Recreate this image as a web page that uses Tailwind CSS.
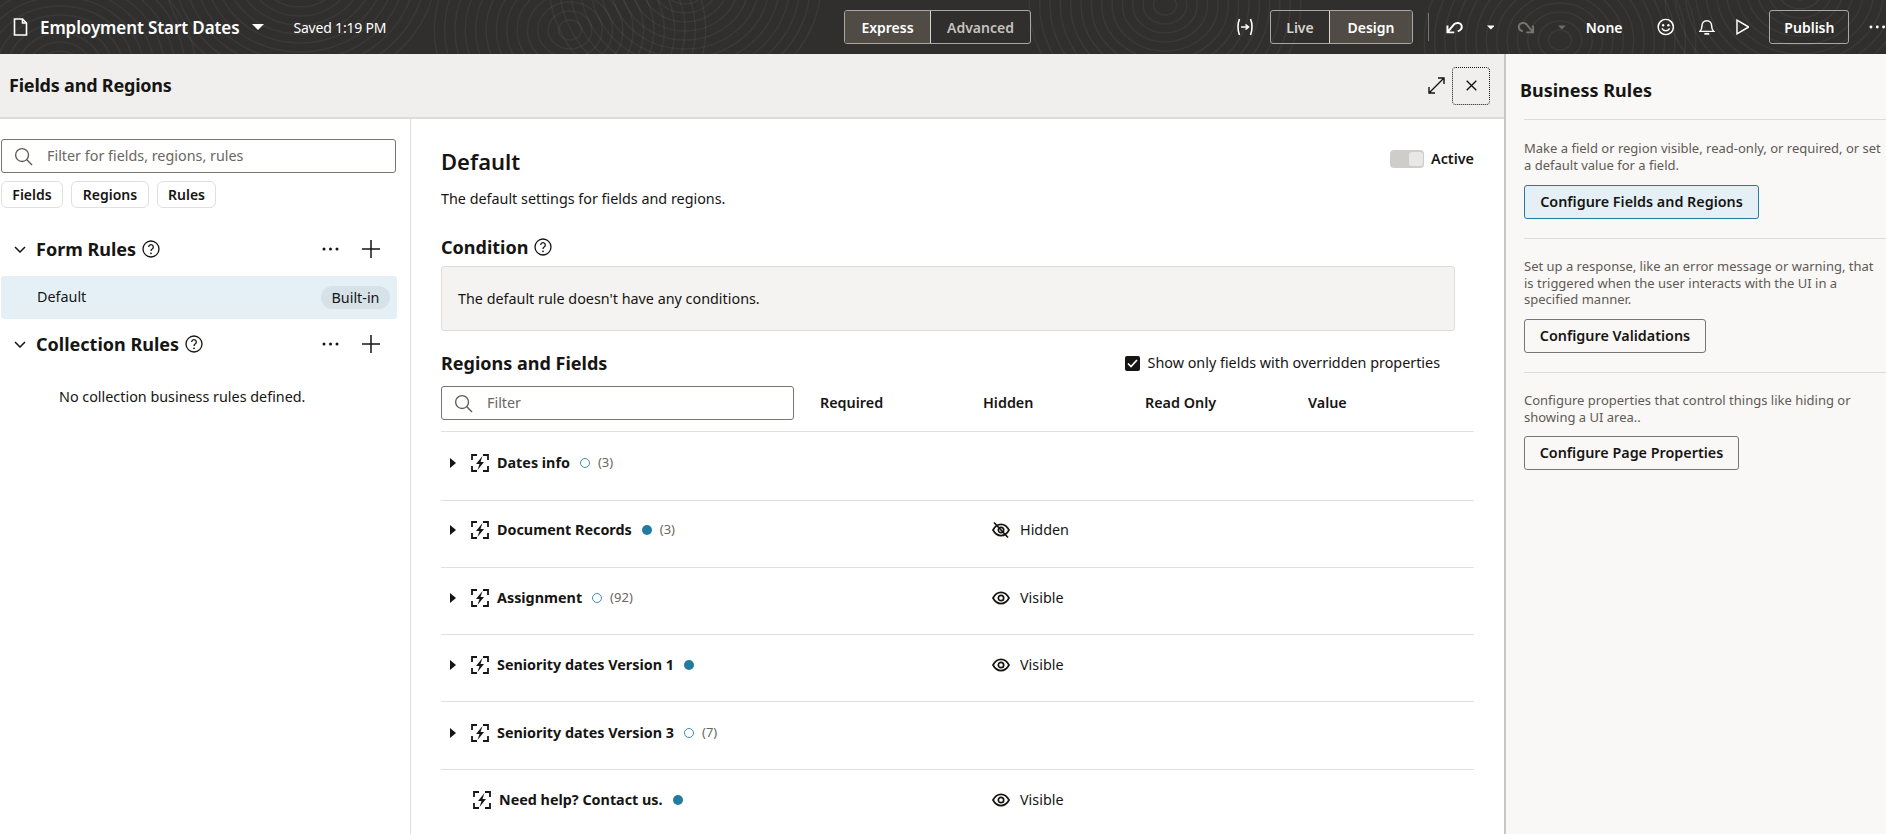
<!DOCTYPE html>
<html lang="en">
<head>
<meta charset="UTF-8">
<title>Employment Start Dates</title>
<script src="https://cdn.jsdelivr.net/npm/@tailwindcss/browser@4"></script>
</head>
<body class="h-[834px] w-[1886px] overflow-hidden bg-white font-['Noto_Sans',sans-serif] text-[14.35px] text-[#161513]">

<svg class="hidden">
  <symbol id="region" viewBox="0 0 18 18">
    <path d="M1 6V1h5M12 1h5v5M17 12v5h-5M6 17H1v-5" fill="none" stroke="#161513" stroke-width="1.800"/>
    <path d="M11.500 2 5 10h3.500L6.500 16l6.500-8H9.500z" fill="#161513"/>
  </symbol>
  <symbol id="eye" viewBox="0 0 18 18">
    <path d="M1 9c2-3.800 4.800-5.600 8-5.600s6 1.800 8 5.600c-2 3.800-4.800 5.600-8 5.600S3 12.800 1 9z" fill="none" stroke="#161513" stroke-width="1.700"/>
    <circle cx="9" cy="9" r="2.700" fill="none" stroke="#161513" stroke-width="1.700"/>
  </symbol>
  <symbol id="help" viewBox="0 0 18 18">
    <circle cx="9" cy="9" r="8" fill="none" stroke="#161513" stroke-width="1.300"/>
    <path d="M6.700 7a2.300 2.300 0 1 1 3.500 2c-.8.5-1.200 1-1.200 1.900" fill="none" stroke="#161513" stroke-width="1.300"/>
    <circle cx="9" cy="13.300" r=".9" fill="#161513"/>
  </symbol>
  <symbol id="search" viewBox="0 0 20 20">
    <circle cx="8.500" cy="8.500" r="6.800" fill="none" stroke="#5f5a55" stroke-width="1.400"/>
    <path d="m13.500 13.500 5.500 5.500" stroke="#5f5a55" stroke-width="1.400"/>
  </symbol>
  <symbol id="plus" viewBox="0 0 18 18">
    <path d="M9 0v18M0 9h18" stroke="#161513" stroke-width="1.500"/>
  </symbol>
  <symbol id="dots" viewBox="0 0 17 4">
    <circle cx="2" cy="2" r="1.500" fill="#161513"/><circle cx="8.500" cy="2" r="1.500" fill="#161513"/><circle cx="15" cy="2" r="1.500" fill="#161513"/>
  </symbol>
  <symbol id="chev" viewBox="0 0 12 7">
    <path d="m1 1 5 5 5-5" fill="none" stroke="#161513" stroke-width="1.500"/>
  </symbol>
  <symbol id="rowcaret" viewBox="0 0 6 10">
    <path d="M0 0 6 5 0 10z" fill="#161513"/>
  </symbol>
  <symbol id="downcaret" viewBox="0 0 12 6">
    <path d="M0 0h12L6 6z" fill="currentColor"/>
  </symbol>
</svg>

<!-- top bar -->
<header class="relative flex h-[54px] items-center overflow-hidden bg-[#302f2e] text-white">
  <svg id="contours" class="absolute inset-0 h-full w-full" viewBox="0 0 1886 54" fill="none"></svg>

  <div class="relative flex w-[844px] shrink-0 items-center pl-[13px]">
    <svg class="h-[18px] w-[15px]" viewBox="0 0 15 18"><path d="M1.500 1h8l4 4v12h-12z M9.500 1v4h4" fill="none" stroke="#fff" stroke-width="1.600"/></svg>
    <span class="ml-[12px] text-[17px] leading-none font-semibold tracking-[-0.1px]">Employment Start Dates</span>
    <svg class="ml-[13px] h-[6px] w-[12px] text-white"><use href="#downcaret"/></svg>
    <span class="ml-[29px] text-[14px] tracking-[-0.2px]">Saved 1:19 PM</span>
  </div>

  <div class="relative flex h-[34px] w-[187px] shrink-0 rounded-[3px] border border-[#a9a6a3] text-[14px] font-semibold">
    <div class="flex w-[86px] items-center justify-center rounded-l-[2px] border-r border-[#d8d6d3] bg-[#514b45]">Express</div>
    <div class="flex flex-1 items-center justify-center text-[#c5c2be]">Advanced</div>
  </div>

  <div class="relative ml-[205px] flex h-[34px] w-[18px] items-center justify-center">
    <svg class="h-[18px] w-[18px]" viewBox="0 0 18 18"><path d="M3.500 1C1.500 5.500 1.500 12.500 3.500 17M14.500 1c2 4.500 2 11.500 0 16" fill="none" stroke="#fff" stroke-width="1.600"/><path d="M5 9h6.500M9.500 6.500 12.500 9l-3 2.500" fill="none" stroke="#fff" stroke-width="1.600"/></svg>
  </div>

  <div class="relative ml-[16px] flex h-[34px] w-[143px] shrink-0 rounded-[3px] border border-[#a9a6a3] text-[14px] font-semibold">
    <div class="flex w-[58px] items-center justify-center text-[#d6d3cf]">Live</div>
    <div class="flex flex-1 items-center justify-center rounded-r-[2px] border-l border-[#d8d6d3] bg-[#514b45]">Design</div>
  </div>

  <div class="relative ml-[15px] h-[28px] w-px bg-[#77736e]"></div>

  <svg class="relative ml-[17px] h-[14px] w-[18px]" viewBox="0 0 18 14"><path d="M1.500 5.500v7h7M1.800 12 8 4.500c2.500-2.500 7-2 8 1 .6 2.500-1 5-4 6" fill="none" stroke="#fff" stroke-width="2"/></svg>
  <svg class="relative ml-[23px] h-[5px] w-[8px] text-white"><use href="#downcaret"/></svg>
  <svg class="relative ml-[23px] h-[14px] w-[18px]" viewBox="0 0 18 14"><path d="M16.500 5.500v7h-7M16.200 12 10 4.500c-2.500-2.500-7-2-8 1-.6 2.500 1 5 4 6" fill="none" stroke="#77736e" stroke-width="2"/></svg>
  <svg class="relative ml-[23px] h-[5px] w-[8px] text-[#6d6964]"><use href="#downcaret"/></svg>
  <span class="relative ml-[20px] w-[37px] text-[14px] font-semibold">None</span>

  <svg class="relative ml-[34px] h-[18px] w-[18px]" viewBox="0 0 18 18"><circle cx="9" cy="9" r="7.800" fill="none" stroke="#fff" stroke-width="1.500"/><circle cx="6.300" cy="7.200" r="1.200" fill="#fff"/><circle cx="11.700" cy="7.200" r="1.200" fill="#fff"/><path d="M5 10.500c1.800 3.200 6.200 3.200 8 0" fill="none" stroke="#fff" stroke-width="1.500"/></svg>
  <svg class="relative ml-[25px] h-[18px] w-[16px]" viewBox="0 0 16 18"><path d="M1 13.500c1.500-1.300 2-2.600 2-5.500 0-3.200 2-5.500 5-5.500s5 2.300 5 5.500c0 2.900.5 4.200 2 5.500z" fill="none" stroke="#fff" stroke-width="1.500"/><path d="M5.500 16h5" stroke="#fff" stroke-width="1.800"/></svg>
  <svg class="relative ml-[21px] h-[16px] w-[14px]" viewBox="0 0 14 16"><path d="M1 1v14l12-7z" fill="none" stroke="#fff" stroke-width="1.500"/></svg>

  <div class="relative ml-[20px] flex h-[34px] w-[82px] items-center justify-center rounded-[3px] border border-[#a9a6a3] text-[14px] font-semibold">Publish</div>
  <svg class="relative ml-[20px] h-[4px] w-[17px]" viewBox="0 0 17 4"><circle cx="2" cy="2" r="1.500" fill="#fff"/><circle cx="8.500" cy="2" r="1.500" fill="#fff"/><circle cx="15" cy="2" r="1.500" fill="#fff"/></svg>
</header>

<div class="flex h-[780px]">
  <!-- fields and regions -->
  <section class="flex w-[1504px] shrink-0 flex-col">
    <div class="flex h-[65px] items-center border-b-2 border-[#dedcd9] bg-[#f0efed] pr-[14px] pl-[9px]">
      <h1 class="flex-1 text-[18px] font-bold tracking-[-0.2px]">Fields and Regions</h1>
      <svg class="h-[17px] w-[17px]" viewBox="0 0 17 17"><path d="M10 1h6v6M16 1 1 16M1 10v6h6" fill="none" stroke="#161513" stroke-width="1.400"/></svg>
      <div class="ml-[7px] flex h-[38px] w-[38px] items-center justify-center rounded-[4px] border border-dotted border-[#161513]">
        <svg class="h-[11px] w-[11px]" viewBox="0 0 11 11"><path d="m.7.700 9.600 9.600M10.300.700.7 10.300" stroke="#161513" stroke-width="1.400"/></svg>
      </div>
    </div>

    <div class="flex min-h-0 flex-1">
      <!-- left column -->
      <aside class="w-[411px] shrink-0 border-r border-[#e2e0dd] pt-[20px] pl-px">
        <div class="flex h-[34px] w-[395px] items-center rounded-[3px] border border-[#7a7571] pl-[12px]">
          <svg class="h-[19px] w-[19px]"><use href="#search"/></svg>
          <span class="ml-[14px] text-[#6b6661]">Filter for fields, regions, rules</span>
        </div>
        <div class="mt-[8px] flex gap-[8px] text-[14px] font-semibold">
          <span class="flex h-[27px] w-[62px] items-center justify-center rounded-[6px] border border-[#e2e0dd]">Fields</span>
          <span class="flex h-[27px] w-[78px] items-center justify-center rounded-[6px] border border-[#e2e0dd]">Regions</span>
          <span class="flex h-[27px] w-[59px] items-center justify-center rounded-[6px] border border-[#e2e0dd]">Rules</span>
        </div>

        <div class="mt-[25px] flex h-[32px] items-center pl-[13px]">
          <svg class="h-[7px] w-[12px]"><use href="#chev"/></svg>
          <span class="ml-[10px] text-[18px] font-bold">Form Rules</span>
          <svg class="ml-[6px] h-[18px] w-[18px]"><use href="#help"/></svg>
          <svg class="ml-auto h-[4px] w-[17px]"><use href="#dots"/></svg>
          <svg class="mr-[30px] ml-[23px] h-[18px] w-[18px]"><use href="#plus"/></svg>
        </div>
        <div class="mt-[11px] flex h-[43px] w-[396px] items-center rounded-[3px] bg-[#e4f0f6] pr-[7px] pl-[36px]">
          <span class="flex-1 pb-[2px]">Default</span>
          <span class="flex h-[23px] w-[69px] items-center justify-center rounded-full bg-[#d6e1e8]">Built-in</span>
        </div>
        <div class="mt-[9px] flex h-[32px] items-center pl-[13px]">
          <svg class="h-[7px] w-[12px]"><use href="#chev"/></svg>
          <span class="ml-[10px] text-[18px] font-bold">Collection Rules</span>
          <svg class="ml-[6px] h-[18px] w-[18px]"><use href="#help"/></svg>
          <svg class="ml-auto h-[4px] w-[17px]"><use href="#dots"/></svg>
          <svg class="mr-[30px] ml-[23px] h-[18px] w-[18px]"><use href="#plus"/></svg>
        </div>
        <p class="mt-[26px] pl-[58px]">No collection business rules defined.</p>
      </aside>

      <!-- default rule -->
      <main class="min-w-0 flex-1 pt-[25px] pr-[30px] pl-[30px]">
        <div class="flex h-[30px] items-center">
          <h2 class="mt-[4px] flex-1 text-[22px] font-semibold">Default</h2>
          <div class="relative h-[18px] w-[34px] rounded-[4px] bg-[#cfcdca]"><div class="absolute top-[2px] right-[1px] h-[14px] w-[14px] rounded-[3px] bg-[#e9e8e6]"></div></div>
          <span class="ml-[7px] font-semibold">Active</span>
        </div>
        <p class="mt-[13px] leading-[24px]">The default settings for fields and regions.</p>
        <div class="mt-[23px] flex h-[26px] items-center">
          <h3 class="text-[18px] font-bold">Condition</h3>
          <svg class="ml-[6px] h-[18px] w-[18px]"><use href="#help"/></svg>
        </div>
        <div class="mt-[6px] flex h-[65px] w-[1014px] items-center rounded-[3px] border border-[#dedcd9] bg-[#f4f3f1] pl-[16px]">The default rule doesn't have any conditions.</div>

        <div class="mt-[19px] flex h-[26px] items-center">
          <h3 class="flex-1 text-[18px] font-bold">Regions and Fields</h3>
          <div class="flex h-[15px] w-[15px] items-center justify-center rounded-[2px] bg-[#161513]">
            <svg class="h-[9px] w-[11px]" viewBox="0 0 11 9"><path d="m1 4.500 3 3 6-6.500" fill="none" stroke="#fff" stroke-width="1.700"/></svg>
          </div>
          <span class="mr-[34px] ml-[8px]">Show only fields with overridden properties</span>
        </div>

        <div class="mt-[10px] flex h-[34px] items-center font-semibold">
          <div class="flex h-[34px] w-[353px] items-center rounded-[3px] border border-[#7a7571] pl-[12px] font-normal">
            <svg class="h-[19px] w-[19px]"><use href="#search"/></svg>
            <span class="ml-[14px] text-[#6b6661]">Filter</span>
          </div>
          <span class="ml-[26px] w-[163px]">Required</span>
          <span class="w-[162px]">Hidden</span>
          <span class="w-[163px]">Read Only</span>
          <span>Value</span>
        </div>

        <div class="mt-[11px] border-t border-[#e2e0dd]">
          <div class="flex h-[69px] items-start border-b border-[#e2e0dd] pt-[21px]">
            <svg class="mt-[5px] ml-[9px] h-[10px] w-[6px]"><use href="#rowcaret"/></svg>
            <svg class="mt-[1px] ml-[15px] h-[18px] w-[18px]"><use href="#region"/></svg>
            <span class="ml-[8px] leading-[20px] font-bold">Dates info</span>
            <span class="mt-[5px] ml-[10px] h-[10px] w-[10px] rounded-full border border-[#3f8db0]"></span>
            <span class="ml-[8px] text-[13px] leading-[18px] text-[#6b6661]">(3)</span>
          </div>
          <div class="flex h-[67px] items-start border-b border-[#e2e0dd] pt-[19px]">
            <div class="flex w-[551px] items-start">
              <svg class="mt-[5px] ml-[9px] h-[10px] w-[6px]"><use href="#rowcaret"/></svg>
              <svg class="mt-[1px] ml-[15px] h-[18px] w-[18px]"><use href="#region"/></svg>
              <span class="ml-[8px] leading-[20px] font-bold">Document Records</span>
              <span class="mt-[5px] ml-[10px] h-[10px] w-[10px] rounded-full bg-[#227c9f]"></span>
              <span class="ml-[8px] text-[13px] leading-[18px] text-[#6b6661]">(3)</span>
            </div>
            <svg class="mt-[1px] h-[18px] w-[18px]" viewBox="0 0 18 18"><use href="#eye"/><path d="M2 1.500 16 16.500" stroke="#161513" stroke-width="1.700"/></svg>
            <span class="ml-[10px] leading-[20px]">Hidden</span>
          </div>
          <div class="flex h-[67px] items-start border-b border-[#e2e0dd] pt-[20px]">
            <div class="flex w-[551px] items-start">
              <svg class="mt-[5px] ml-[9px] h-[10px] w-[6px]"><use href="#rowcaret"/></svg>
              <svg class="mt-[1px] ml-[15px] h-[18px] w-[18px]"><use href="#region"/></svg>
              <span class="ml-[8px] leading-[20px] font-bold">Assignment</span>
              <span class="mt-[5px] ml-[10px] h-[10px] w-[10px] rounded-full border border-[#3f8db0]"></span>
              <span class="ml-[8px] text-[13px] leading-[18px] text-[#6b6661]">(92)</span>
            </div>
            <svg class="mt-[1px] h-[18px] w-[18px]"><use href="#eye"/></svg>
            <span class="ml-[10px] leading-[20px]">Visible</span>
          </div>
          <div class="flex h-[67px] items-start border-b border-[#e2e0dd] pt-[20px]">
            <div class="flex w-[551px] items-start">
              <svg class="mt-[5px] ml-[9px] h-[10px] w-[6px]"><use href="#rowcaret"/></svg>
              <svg class="mt-[1px] ml-[15px] h-[18px] w-[18px]"><use href="#region"/></svg>
              <span class="ml-[8px] leading-[20px] font-bold">Seniority dates Version 1</span>
              <span class="mt-[5px] ml-[10px] h-[10px] w-[10px] rounded-full bg-[#227c9f]"></span>
            </div>
            <svg class="mt-[1px] h-[18px] w-[18px]"><use href="#eye"/></svg>
            <span class="ml-[10px] leading-[20px]">Visible</span>
          </div>
          <div class="flex h-[68px] items-start border-b border-[#e2e0dd] pt-[21px]">
            <svg class="mt-[5px] ml-[9px] h-[10px] w-[6px]"><use href="#rowcaret"/></svg>
            <svg class="mt-[1px] ml-[15px] h-[18px] w-[18px]"><use href="#region"/></svg>
            <span class="ml-[8px] leading-[20px] font-bold">Seniority dates Version 3</span>
            <span class="mt-[5px] ml-[10px] h-[10px] w-[10px] rounded-full border border-[#3f8db0]"></span>
            <span class="ml-[8px] text-[13px] leading-[18px] text-[#6b6661]">(7)</span>
          </div>
          <div class="flex items-start pt-[20px]">
            <div class="flex w-[551px] items-start">
              <svg class="mt-[1px] ml-[32px] h-[18px] w-[18px]"><use href="#region"/></svg>
              <span class="ml-[8px] leading-[20px] font-bold">Need help? Contact us.</span>
              <span class="mt-[5px] ml-[10px] h-[10px] w-[10px] rounded-full bg-[#227c9f]"></span>
            </div>
            <svg class="mt-[1px] h-[18px] w-[18px]"><use href="#eye"/></svg>
            <span class="ml-[10px] leading-[20px]">Visible</span>
          </div>
        </div>
      </main>
    </div>
  </section>

  <!-- business rules -->
  <aside class="min-w-0 flex-1 border-l-2 border-[#c9c7c4] bg-[#faf8f6] pt-[22px] pl-[14px]">
    <h2 class="h-[28px] text-[18px] leading-[28px] font-bold">Business Rules</h2>
    <div class="mt-[15px] ml-[4px] border-t border-[#dedcd9] pt-[20px]">
      <p class="text-[13px] leading-[17px] whitespace-nowrap text-[#5f5a55]">Make a field or region visible, read-only, or required, or set<br>a default value for a field.</p>
      <div class="mt-[11px] flex h-[34px] w-[235px] items-center justify-center rounded-[3px] border border-[#227c9f] bg-[#e4f0f6] text-[14.35px] font-semibold">Configure Fields and Regions</div>
    </div>
    <div class="mt-[19px] ml-[4px] border-t border-[#dedcd9] pt-[19px]">
      <p class="text-[13px] leading-[16.500px] whitespace-nowrap text-[#5f5a55]">Set up a response, like an error message or warning, that<br>is triggered when the user interacts with the UI in a<br>specified manner.</p>
      <div class="mt-[11px] flex h-[34px] w-[182px] items-center justify-center rounded-[3px] border border-[#7a7571] font-semibold">Configure Validations</div>
    </div>
    <div class="mt-[19px] ml-[4px] border-t border-[#dedcd9] pt-[19px]">
      <p class="text-[13px] leading-[17px] whitespace-nowrap text-[#5f5a55]">Configure properties that control things like hiding or<br>showing a UI area..</p>
      <div class="mt-[10px] flex h-[34px] w-[215px] items-center justify-center rounded-[3px] border border-[#7a7571] font-semibold">Configure Page Properties</div>
    </div>
  </aside>
</div>

<script>
  // faint contour pattern behind the top bar
  const contours = document.getElementById('contours');
  const centers = [[60, 70], [300, -30], [570, 30], [685, -15], [1165, 5], [1560, 40], [1800, -10]];
  let markup = '';
  centers.forEach(([cx, cy]) => {
    for (let r = 10; r < 120; r += 9) {
      markup += `<ellipse cx="${cx}" cy="${cy}" rx="${r * 1.15}" ry="${r}" stroke="rgba(255,255,255,0.05)" stroke-width="1.5"/>`;
    }
  });
  contours.innerHTML = markup;
</script>
</body>
</html>
